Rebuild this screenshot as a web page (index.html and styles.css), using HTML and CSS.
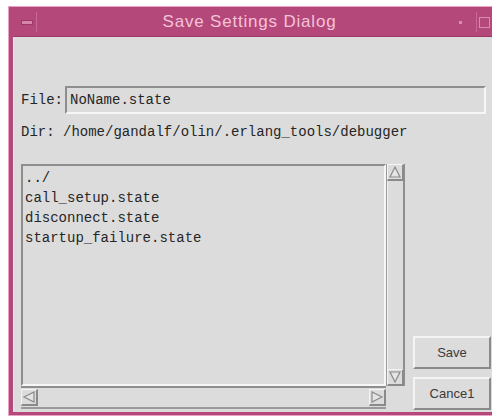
FILE: index.html
```html
<!DOCTYPE html>
<html>
<head>
<meta charset="utf-8">
<title>Save Settings Dialog</title>
<link rel="stylesheet" href="styles.css">
</head>
<body>
<div class="window">
  <div class="titlebar">
    <div class="wbtn menu-btn"><span class="dash"></span></div>
    <div class="title">Save Settings Dialog</div>
    <div class="wbtn iconify-btn"><span class="dot"></span></div>
    <div class="wbtn max-btn"><span class="square"></span></div>
  </div>
  <div class="client">
    <div class="file-row">
      <span class="label">File:</span>
      <div class="entry">NoName.state</div>
    </div>
    <div class="dir-row">Dir: /home/gandalf/olin/.erlang_tools/debugger</div>
    <div class="main">
      <div class="listpane">
        <div class="listbox">
          <div class="item">../</div>
          <div class="item">call_setup.state</div>
          <div class="item">disconnect.state</div>
          <div class="item">startup_failure.state</div>
        </div>
        <div class="vscroll">
          <div class="arrow up"><svg width="14" height="14" viewBox="0 0 14 14"><path d="M7 2 L12 12 L2 12 Z" fill="#e4e4e4" stroke="#8a8a8a" stroke-width="1.2"/></svg></div>
          <div class="vtrack"></div>
          <div class="arrow down"><svg width="14" height="14" viewBox="0 0 14 14"><path d="M2 2 L12 2 L7 12 Z" fill="#e4e4e4" stroke="#8a8a8a" stroke-width="1.2"/></svg></div>
        </div>
        <div class="hscroll">
          <div class="arrow left"><svg width="14" height="14" viewBox="0 0 14 14"><path d="M2 7 L12 2 L12 12 Z" fill="#e4e4e4" stroke="#8a8a8a" stroke-width="1.2"/></svg></div>
          <div class="htrack"></div>
          <div class="arrow right"><svg width="14" height="14" viewBox="0 0 14 14"><path d="M12 7 L2 2 L2 12 Z" fill="#e4e4e4" stroke="#8a8a8a" stroke-width="1.2"/></svg></div>
        </div>
        <div class="corner"></div>
      </div>
      <div class="buttons">
        <div class="button">Save</div>
        <div class="button">Cance1</div>
      </div>
    </div>
  </div>
</div>
</body>
</html>
```

FILE: styles.css
```css
html, body {
  margin: 0;
  padding: 0;
  background: #ffffff;
}

.window {
  margin: 6px 0 0 8px;
  width: 484px;
  height: 410px;
  box-sizing: border-box;
  background: #b5487a;
  border-top: 1px solid #e8a3c3;
  border-left: 1px solid #e8a3c3;
  border-bottom: 1px solid #e8a3c3;
  display: flex;
  flex-direction: column;
  padding: 1px 0 3px 4px;
}

/* title bar */
.titlebar {
  height: 28px;
  display: flex;
  align-items: center;
  background: #b5487a;
  border-bottom: 1px solid #9c3a66;
}

.wbtn {
  display: flex;
  align-items: center;
  justify-content: center;
}

.menu-btn {
  width: 20px;
  height: 20px;
  margin-left: 4px;
  border-right: 1px solid #c86a95;
  box-sizing: border-box;
}

.dash {
  width: 10px;
  height: 3px;
  background: #d684aa;
  border: 1px solid #9a3a64;
}

.title {
  flex: 1;
  text-align: center;
  font-family: "Liberation Sans", Arial, sans-serif;
  font-size: 17px;
  letter-spacing: 0.8px;
  color: #f4c2d9;
  padding-left: 10px;
}

.iconify-btn {
  width: 16px;
  height: 20px;
  margin-right: 8px;
}

.dot {
  width: 3px;
  height: 3px;
  background: #d98cb1;
}

.max-btn {
  width: 16px;
  height: 20px;
  border-left: 1px solid #c86a95;
  box-sizing: border-box;
}

.square {
  width: 9px;
  height: 9px;
  border: 1px solid #d98cb1;
}

/* dialog body */
.client {
  flex: 1;
  background: #dcdcdc;
  border-left: 1px solid #e9e9e9;
  font-family: "Liberation Mono", "Courier New", monospace;
  font-size: 14px;
  color: #262626;
  display: flex;
  flex-direction: column;
  padding: 49px 0 0 7px;
  box-sizing: border-box;
}

.file-row {
  display: flex;
  align-items: center;
  height: 28px;
  margin-right: 6px;
}

.label {
  width: 44px;
}

.entry {
  flex: 1;
  height: 28px;
  box-sizing: border-box;
  border-top: 2px solid #8e8e8e;
  border-left: 2px solid #8e8e8e;
  border-bottom: 2px solid #f6f6f6;
  border-right: 2px solid #f6f6f6;
  padding-left: 3px;
  line-height: 24px;
}

.dir-row {
  margin-top: 9px;
  height: 18px;
  line-height: 18px;
}

.main {
  margin-top: 23px;
  display: flex;
  align-items: flex-end;
  flex: 1;
  padding-bottom: 2px;
}

.listpane {
  display: grid;
  grid-template-columns: 365px 20px;
  grid-template-rows: 222px 23px;
  align-self: flex-start;
}

.listbox {
  border-top: 2px solid #8e8e8e;
  border-left: 2px solid #8e8e8e;
  border-bottom: 2px solid #f6f6f6;
  border-right: 2px solid #f6f6f6;
  padding: 2px 0 0 2px;
  box-sizing: border-box;
}

.item {
  height: 20px;
  line-height: 20px;
}

.vscroll {
  display: flex;
  flex-direction: column;
  border-left: 1px solid #9a9a9a;
  border-right: 2px solid #8e8e8e;
  box-sizing: border-box;
  width: 19px;
}

.vtrack {
  flex: 1;
  border-left: 1px solid #f4f4f4;
}

.hscroll {
  display: flex;
  align-items: center;
  border-top: 2px solid #8e8e8e;
  border-bottom: 2px solid #9a9a9a;
  box-sizing: border-box;
}

.htrack {
  flex: 1;
}

.arrow {
  width: 17px;
  height: 17px;
  display: flex;
  align-items: center;
  justify-content: center;
  box-sizing: border-box;
  border-top: 1px solid #f4f4f4;
  border-left: 1px solid #f4f4f4;
  border-bottom: 2px solid #8a8a8a;
  border-right: 2px solid #8a8a8a;
  background: #dcdcdc;
}

.corner {
  background: #dcdcdc;
}

.buttons {
  margin-left: 7px;
  display: flex;
  flex-direction: column;
  gap: 8px;
}

.button {
  width: 78px;
  height: 33px;
  box-sizing: border-box;
  border-top: 2px solid #f4f4f4;
  border-left: 2px solid #f4f4f4;
  border-bottom: 2px solid #8a8a8a;
  border-right: 2px solid #8a8a8a;
  display: flex;
  align-items: center;
  justify-content: center;
  font-family: "Liberation Sans", Arial, sans-serif;
  font-size: 13px;
  color: #3a3a3a;
}
```
